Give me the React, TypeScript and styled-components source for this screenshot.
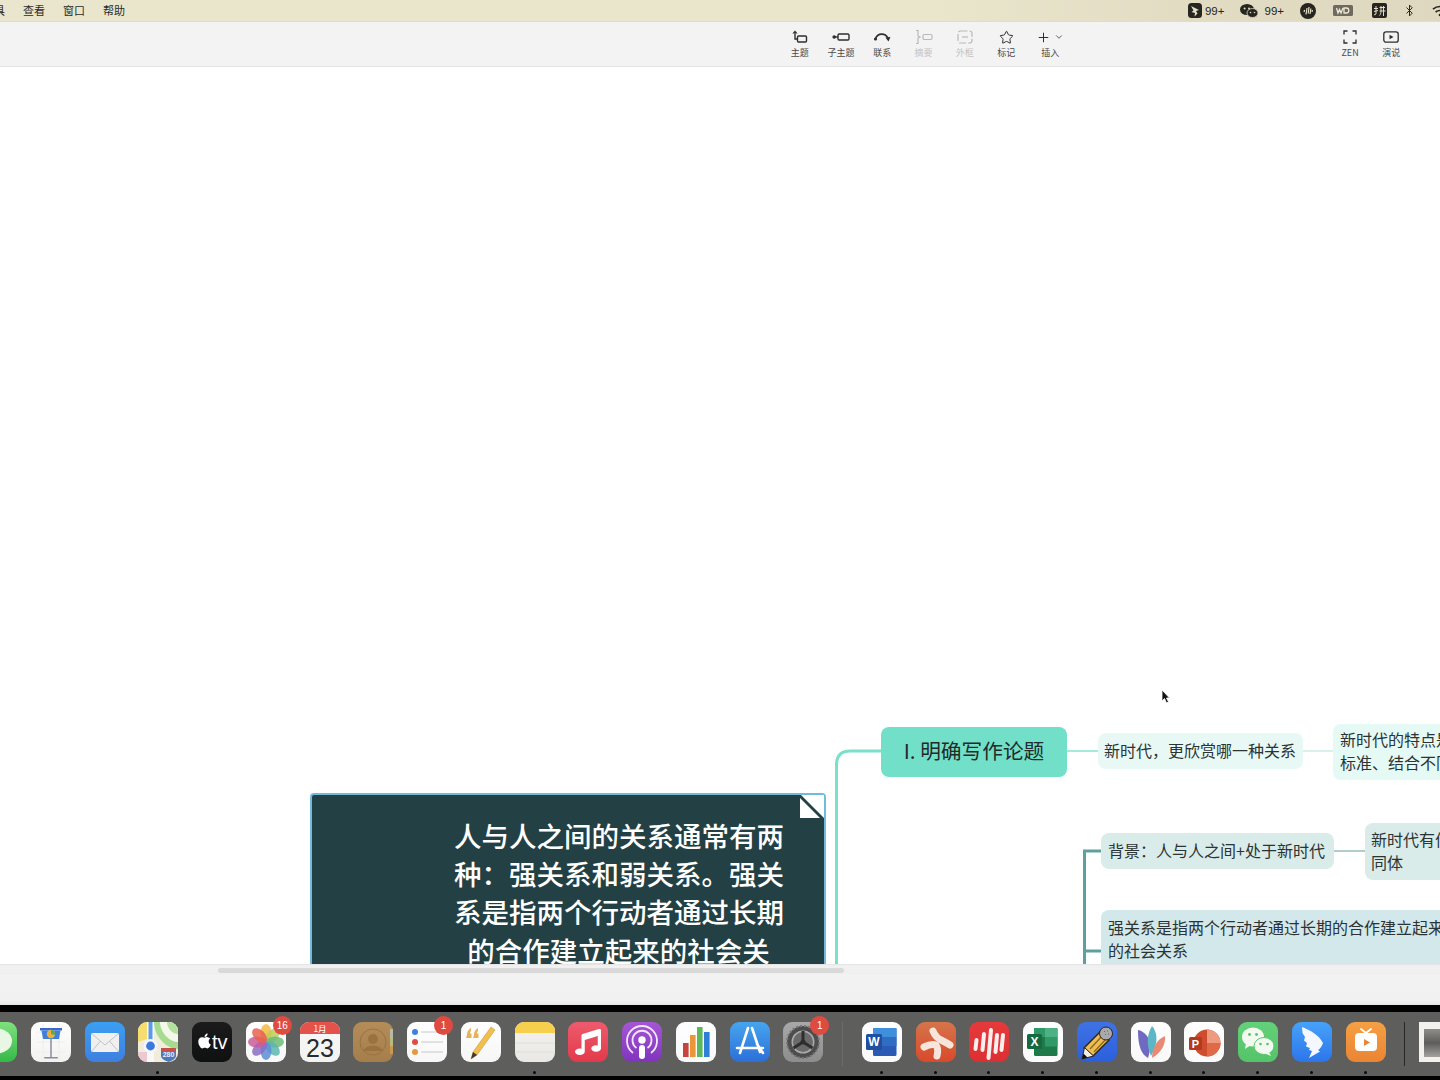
import React from "react";
import styled, { createGlobalStyle } from "styled-components";
import { Star, Plus, ChevronDown, Bluetooth } from "lucide-react";
import { FaApple, FaMusic } from "react-icons/fa";

const GlobalStyle = createGlobalStyle`
  html, body {
    margin: 0;
    padding: 0;
    overflow: hidden;
    background: #fff;
  }
`;

const Page = styled.div`
  width: 1440px;
  height: 1080px;
  display: flex;
  flex-direction: column;
  overflow: hidden;
  font-family: "Noto Sans CJK SC", "Noto Sans", sans-serif;
`;

// Menu bar
const MenuBar = styled.div`
  height: 21px;
  flex: none;
  display: flex;
  align-items: center;
  background: linear-gradient(90deg, #e9e6cd 0%, #e9e6cc 65%, #e2dcc3 82%, #dfd8c0 100%);
  border-bottom: 1px solid #e0ddc4;
  overflow: hidden;
`;

const MenuList = styled.div`
  display: flex;
  gap: 18px;
  margin-left: -6px;
  padding-bottom: 2px;
  font-size: 11px;
  color: #2b2b26;
`;

const Tray = styled.div`
  margin-left: auto;
  margin-right: -8px;
  display: flex;
  align-items: center;
  gap: 16px;
  color: #26251f;
`;

const TrayPair = styled.div<{ $gap: number }>`
  display: flex;
  align-items: center;
  gap: ${(p) => p.$gap}px;
  font-family: "Liberation Sans", sans-serif;
  font-size: 11.5px;
`;

const DiskSlot = styled.div`
  display: flex;
  margin: 0 3px 0 1px;
`;

// Toolbar
const Toolbar = styled.div`
  height: 44px;
  flex: none;
  display: flex;
  padding-left: 779px;
  padding-right: 28px;
  background: #f4f3f4;
  border-bottom: 1px solid #e4e4e4;
`;

const ToolGroup = styled.div<{ $end?: boolean }>`
  display: flex;
  margin-left: ${(p) => (p.$end ? "auto" : "0")};
`;

const Tool = styled.div<{ $off?: boolean; $wide?: boolean }>`
  width: ${(p) => (p.$wide ? 47 : 41.3)}px;
  display: flex;
  flex-direction: column;
  align-items: center;
  padding-top: 7px;
  color: ${(p) => (p.$off ? "#b9b9b9" : "#2e2e2e")};
`;

const ToolIcon = styled.div`
  height: 16px;
  display: flex;
  align-items: center;
  justify-content: center;
  gap: 3px;
`;

const ToolLabel = styled.div<{ $off?: boolean }>`
  margin-top: 2px;
  font-size: 9px;
  line-height: 12px;
  color: ${(p) => (p.$off ? "#c2c2c2" : "#4a4a4a")};
`;

// Canvas
const Canvas = styled.div`
  position: relative;
  flex: 1;
  background: #fff;
  overflow: hidden;
`;

const Links = styled.svg`
  position: absolute;
  inset: 0;
  width: 100%;
  height: 100%;
`;

const Node = styled.div<{
  $x: number;
  $y: number;
  $w: number;
  $h: number;
  $bg: string;
  $pad?: number;
}>`
  position: absolute;
  left: ${(p) => p.$x}px;
  top: ${(p) => p.$y}px;
  width: ${(p) => p.$w}px;
  height: ${(p) => p.$h}px;
  box-sizing: border-box;
  padding-left: ${(p) => p.$pad ?? 7}px;
  padding-bottom: 2px;
  display: flex;
  align-items: center;
  background: ${(p) => p.$bg};
  border-radius: 8px;
  color: #2b3334;
  font-size: 16px;
  line-height: 23px;
  white-space: nowrap;
`;

const TopicTitle = styled(Node)`
  justify-content: center;
  padding-left: 0;
  padding-bottom: 4px;
  font-size: 20.7px;
  color: #1f2b2a;
`;

const BlockNode = styled(Node)<{ $top: number }>`
  display: block;
  padding-top: ${(p) => p.$top}px;
  padding-bottom: 0;
`;

const NoteCard = styled.div`
  position: absolute;
  left: 310px;
  top: 726px;
  width: 516px;
  height: 260px;
  box-sizing: border-box;
  padding: 21px 41px 0 142px;
  border: 2px solid #71bcdc;
  border-radius: 4px;
  background: #234145;
  color: #fff;
  font-size: 27.5px;
  font-weight: 500;
  line-height: 38.2px;
  text-align: center;
  white-space: nowrap;
`;

const NoteFold = styled.svg`
  position: absolute;
  top: -2px;
  right: -2px;
  width: 28px;
  height: 28px;
`;

const Cursor = styled.svg`
  position: absolute;
  left: 1161px;
  top: 622px;
  width: 9px;
  height: 15px;
`;

// Bottom chrome
const ScrollTrack = styled.div`
  height: 11px;
  flex: none;
  box-sizing: border-box;
  padding: 3px 0 2px 218px;
  background: #f0f0f0;
  border-top: 1px solid #e4e4e4;
`;

const ScrollThumb = styled.div`
  width: 626px;
  height: 5px;
  border-radius: 3px;
  background: #d9d9d9;
`;

const StatusBar = styled.div`
  height: 30px;
  flex: none;
  background: linear-gradient(180deg, #f3f3f3 0%, #f1f1f1 85%, #e6e6e6 100%);
`;

const BlackBand = styled.div<{ $h: number }>`
  height: ${(p) => p.$h}px;
  flex: none;
  background: #020202;
`;

const Dock = styled.div`
  height: 64px;
  flex: none;
  box-sizing: border-box;
  padding: 10px 0 0;
  display: flex;
  align-items: flex-start;
  gap: 13.75px;
  background: #5e5e5d;
`;

const DockSlot = styled.div<{ $first?: boolean }>`
  position: relative;
  width: 40px;
  height: 40px;
  flex: none;
  margin-left: ${(p) => (p.$first ? "-23px" : "0")};

  > svg {
    display: block;
  }
`;

const Badge = styled.div`
  position: absolute;
  top: -6px;
  right: -6px;
  width: 19px;
  height: 19px;
  border-radius: 50%;
  background: #df4a41;
  color: #fff;
  font-family: "Liberation Sans", sans-serif;
  font-size: 10px;
  line-height: 19px;
  text-align: center;
`;

const RunDot = styled.div`
  position: absolute;
  left: 18px;
  bottom: -12px;
  width: 3px;
  height: 3px;
  border-radius: 50%;
  background: #0c0c0c;
`;

const DockDivider = styled.div<{ $last?: boolean }>`
  width: 1px;
  height: 44px;
  flex: none;
  margin: 0 ${(p) => (p.$last ? 0 : 5)}px 0 5px;
  background: ${(p) => (p.$last ? "#272727" : "#6c6c6c")};
`;

const DocThumb = styled.div`
  width: 24px;
  height: 40px;
  flex: none;
  box-sizing: border-box;
  padding: 7px 3px 5px 5px;
  background: #f2f1ee;
`;

const DocInk = styled.div`
  height: 100%;
  background: linear-gradient(180deg, #8f8d8a, #5f5d5b 50%, #a3a19e);
`;

// Toolbar drawings
const TopicIcon = () => (
  <svg width="16" height="16" viewBox="0 0 16 16" fill="none" stroke="currentColor" strokeWidth="1.4">
    <rect x="5.5" y="7" width="9" height="6" rx="1" />
    <path d="M3 4.5V10H5.5" />
    <path d="M3 1.5L5.6 4.5H.4Z" fill="currentColor" stroke="none" />
  </svg>
);

const SubTopicIcon = () => (
  <svg width="18" height="16" viewBox="0 0 18 16" fill="none" stroke="currentColor" strokeWidth="1.4">
    <circle cx="2.2" cy="8" r="1.8" fill="currentColor" stroke="none" />
    <path d="M2 8H6" />
    <rect x="6" y="5" width="11" height="6" rx="1.2" />
  </svg>
);

const RelationIcon = () => (
  <svg width="18" height="16" viewBox="0 0 18 16" fill="none" stroke="currentColor" strokeWidth="1.6">
    <path d="M2.5 9.5C5 3.8 12 3.8 15 9" />
    <circle cx="2.5" cy="10" r="1.6" fill="currentColor" stroke="none" />
    <path d="M12.4 8.6L17.4 8L15.5 12.4Z" fill="currentColor" stroke="none" />
  </svg>
);

const SummaryIcon = () => (
  <svg width="18" height="16" viewBox="0 0 18 16" fill="none" stroke="currentColor" strokeWidth="1.2">
    <path d="M1 1.5H3V7L5 8L3 9V14.5H1" />
    <rect x="8" y="5.5" width="9" height="5" rx="1.2" />
  </svg>
);

const BoundaryIcon = () => (
  <svg width="16" height="16" viewBox="0 0 16 16" fill="none" stroke="currentColor" strokeWidth="1.2">
    <rect x="1" y="2" width="14" height="12" rx="2.5" strokeDasharray="7 2" />
    <path d="M5 8H11" />
  </svg>
);

const ZenIcon = () => (
  <svg width="14" height="14" viewBox="0 0 14 14" fill="none" stroke="currentColor" strokeWidth="1.3">
    <path d="M1 4.5V1H4.5M9.5 1H13V4.5M13 9.5V13H9.5M4.5 13H1V9.5" />
  </svg>
);

const PresentIcon = () => (
  <svg width="16" height="14" viewBox="0 0 16 14" fill="none" stroke="currentColor" strokeWidth="1.3">
    <rect x=".8" y="1.8" width="14.4" height="10.4" rx="2.2" />
    <path d="M6.5 4.7L10.5 7L6.5 9.3Z" fill="currentColor" stroke="none" />
  </svg>
);

// Menu bar drawings
const DingTray = () => (
  <svg width="14" height="15" viewBox="0 0 14 15">
    <rect width="14" height="15" rx="3.5" fill="#26251f" />
    <path d="M3 3L11 7L8 8L9.5 10.5L6.5 13.5L7 10L3.5 9L5.5 7.5Z" fill="#e6dfc6" />
  </svg>
);

const WechatTray = () => (
  <svg width="18" height="14" viewBox="0 0 18 14">
    <ellipse cx="7" cy="5.5" rx="7" ry="5.5" fill="#26251f" />
    <ellipse cx="12.5" cy="9" rx="5.5" ry="4.5" fill="#26251f" stroke="#e2dcc3" strokeWidth=".8" />
    <circle cx="4.6" cy="4.5" r="1" fill="#e2dcc3" />
    <circle cx="9" cy="4.5" r="1" fill="#e2dcc3" />
    <circle cx="10.5" cy="8.5" r=".8" fill="#e2dcc3" />
    <circle cx="14.5" cy="8.5" r=".8" fill="#e2dcc3" />
  </svg>
);

const WaveTray = () => (
  <svg width="16" height="16" viewBox="0 0 16 16">
    <circle cx="8" cy="8" r="8" fill="#26251f" />
    <path d="M4 9L4.6 7M6 11.5L7 5M8.2 10.5L9 4M10 11L10.9 5.5M12 9L12.4 7" stroke="#e6dfc6" strokeWidth="1.2" />
  </svg>
);

const DiskTray = () => (
  <svg width="20" height="11" viewBox="0 0 20 11">
    <rect width="20" height="11" rx="1.5" fill="#6f6a5f" />
    <path d="M3.5 3L5 8L6.5 4.5L8 8L10 3M11 3V8H13.5C16.5 8 16.5 3 13.5 3Z" fill="none" stroke="#eee8d2" strokeWidth="1.3" />
  </svg>
);

const PinyinTray = () => (
  <svg width="15" height="15" viewBox="0 0 15 15">
    <rect width="15" height="15" rx="2" fill="#26251f" />
    <path d="M2 5.5H6M4 3V11L2 12M2 8.5L6 7.5M7.5 4.5H13M7.5 8H13.5M9 3V8C9 10 8.5 11.5 7.5 12.5M11.5 3V13" fill="none" stroke="#e6dfc6" strokeWidth="1" />
  </svg>
);

const WifiTray = () => (
  <svg width="16" height="12" viewBox="0 0 16 12" fill="none" stroke="#26251f" strokeWidth="1.7">
    <path d="M1 4.2C5 .6 11 .6 15 4.2M3.6 7C6 5 10 5 12.4 7" />
    <circle cx="8" cy="10" r="1.3" fill="#26251f" stroke="none" />
  </svg>
);

// Dock drawings
const Tile: React.FC<{ id: string; top: string; bottom: string; children?: React.ReactNode }> = ({
  id,
  top,
  bottom,
  children,
}) => (
  <svg width="40" height="40" viewBox="0 0 40 40">
    <defs>
      <linearGradient id={id} x1="0" y1="0" x2="0" y2="1">
        <stop offset="0" stopColor={top} />
        <stop offset="1" stopColor={bottom} />
      </linearGradient>
    </defs>
    <rect width="40" height="40" rx="9" fill={`url(#${id})`} />
    {children}
  </svg>
);

const Messages = () => (
  <Tile id="msg" top="#7ee27d" bottom="#35b847">
    <ellipse cx="20" cy="19" rx="15" ry="12.5" fill="#e8f7e4" />
  </Tile>
);

const Keynote = () => (
  <Tile id="key" top="#ffffff" bottom="#f2f2f0">
    <path d="M6 10H34M6 20H34M6 30H34M12 2V38M28 2V38" stroke="#eeeeee" strokeWidth="1" />
    <rect x="9" y="6" width="22" height="2.5" fill="#3767c8" />
    <path d="M10.5 8.5H29.5L28 17H12Z" fill="#3f7fd9" />
    <circle cx="20" cy="12" r="4.2" fill="#e8b23f" />
    <path d="M20 12V7.8A4.2 4.2 0 0 1 24 13Z" fill="#5ba85b" />
    <rect x="19" y="17" width="2" height="18" fill="#a9a7b4" />
    <rect x="13" y="35" width="14" height="1.6" rx=".8" fill="#8d8b99" />
  </Tile>
);

const Mail = () => (
  <Tile id="mail" top="#3aa0f2" bottom="#3f7ee0">
    <rect x="6" y="11" width="28" height="19" rx="2" fill="#f1f0ee" />
    <path d="M6.5 11.5L20 23L33.5 11.5M6.5 29.5L15.5 19M33.5 29.5L24.5 19" fill="none" stroke="#bfc3cc" strokeWidth="1" />
  </Tile>
);

const Maps = () => (
  <Tile id="maps" top="#eef1dc" bottom="#f2eadb">
    <path d="M16 0H31A9 9 0 0 1 40 9V27C28 27 16 14 16 0Z" fill="#a5dc8f" />
    <path d="M22 0H31A9 9 0 0 1 40 9V20C31 20 22 10 22 0Z" fill="#f3f8ea" />
    <path d="M29 0H31A9 9 0 0 1 40 9V12C34 12 29 6 29 0Z" fill="#b4e29e" />
    <path d="M0 9A9 9 0 0 1 9 0H9V17L0 20Z" fill="#f5dd70" />
    <path d="M0 30H9V40H9A9 9 0 0 1 0 31Z" fill="#eec8d0" />
    <rect x="9" y="0" width="7" height="40" fill="#f8f8f5" />
    <rect x="10.5" y="0" width="4" height="20" fill="#5a9ae8" />
    <circle cx="12.5" cy="24" r="7" fill="#f5f6fb" />
    <circle cx="12.5" cy="24" r="4.4" fill="#3d79dd" />
    <path d="M23 27H38V34C38 37 33 39 30.500 40C28 39 23 37 23 34Z" fill="#4c79ba" />
    <rect x="23" y="26" width="15" height="3" fill="#c6514a" />
    <text x="30.500" y="35" textAnchor="middle" fill="#e8eef6" fontSize="7" fontWeight="700" fontFamily="Liberation Sans, sans-serif">
      280
    </text>
  </Tile>
);

const AppleTv = () => (
  <Tile id="tv" top="#1b1b1c" bottom="#0f1010">
    <g transform="translate(4 10.500)">
      <FaApple size={17} color="#fff" />
    </g>
    <text x="20" y="27" fill="#fff" fontFamily="Liberation Sans, sans-serif" fontSize="20">
      tv
    </text>
  </Tile>
);

const Photos = () => {
  const petals = ["#f5b942", "#b9cf5a", "#6dbb75", "#5ab5b0", "#5b8fd6", "#8b6cc4", "#c85c9a", "#e8604e"];
  return (
    <Tile id="pho" top="#ffffff" bottom="#f8f8f8">
      {petals.map((color, i) => (
        <ellipse
          key={color}
          cx="20"
          cy="11"
          rx="5.5"
          ry="9"
          fill={color}
          opacity=".85"
          transform={`rotate(${i * 45} 20 20)`}
        />
      ))}
    </Tile>
  );
};

const Calendar = () => (
  <Tile id="cal" top="#f8f8f7" bottom="#f2f2f1">
    <path d="M0 12V9A9 9 0 0 1 9 0H31A9 9 0 0 1 40 9V12Z" fill="#e5514b" />
    <text x="20" y="9.500" textAnchor="middle" fill="#fff" fontSize="8.500" fontFamily="Noto Sans CJK SC, sans-serif">
      1月
    </text>
    <text x="20" y="34.700" textAnchor="middle" fill="#2a2a2a" fontSize="25" fontFamily="Liberation Sans, sans-serif">
      23
    </text>
  </Tile>
);

const Contacts = () => (
  <Tile id="con" top="#b48c58" bottom="#a67e4c">
    <circle cx="20" cy="20" r="13" fill="none" stroke="#98733f" strokeWidth="1" />
    <circle cx="20" cy="17" r="5" fill="#98733f" />
    <path d="M10 29C13 22 27 22 30 29" fill="#98733f" />
    <rect x="37" y="7" width="3" height="9" fill="#b7b9a7" />
    <rect x="37" y="16" width="3" height="8" fill="#b9ba80" />
    <rect x="37" y="24" width="3" height="8" fill="#c99a4e" />
  </Tile>
);

const Reminders = () => (
  <Tile id="rem" top="#ffffff" bottom="#f7f7f7">
    <circle cx="8" cy="10" r="3" fill="#3f7fe0" />
    <circle cx="8" cy="20" r="3" fill="#dc4e45" />
    <circle cx="8" cy="30" r="3" fill="#e49a3e" />
    <path d="M14 10H36M14 20H36M14 30H36" stroke="#c8c8c8" strokeWidth="1" />
  </Tile>
);

const Pages = () => (
  <Tile id="pag" top="#ffffff" bottom="#f6f6f6">
    <path d="M6 13C6 9 8 7 10 6V9C9 10 9 11 9 11.500H10.500V16H5ZM13 13C13 9 15 7 17 6V9C16 10 16 11 16 11.500H17.500V16H12Z" fill="#e7b35a" />
    <path d="M30 5L34 8L16 33L10 37L12 30Z" fill="#f0bf4e" stroke="#c99a3c" strokeWidth=".6" />
    <path d="M10 37L12 30L16 33Z" fill="#3a3a3a" />
  </Tile>
);

const Notes = () => (
  <Tile id="not" top="#f3f2ef" bottom="#e9e8e5">
    <path d="M0 11V9A9 9 0 0 1 9 0H31A9 9 0 0 1 40 9V11Z" fill="#f6d04d" />
    <path d="M0 21H40M0 30H40" stroke="#dcdbd8" strokeWidth=".8" />
  </Tile>
);

const Music = () => (
  <Tile id="mus" top="#ee5b6d" bottom="#e23a4b">
    <g transform="translate(7 7)">
      <FaMusic size={26} color="#fff" />
    </g>
  </Tile>
);

const Podcasts = () => (
  <Tile id="pod" top="#a556d6" bottom="#7f35bd">
    <g fill="none" stroke="#f1e6fa" strokeWidth="1.800">
      <path d="M11 31A15 15 0 1 1 29 31" />
      <path d="M14.500 26A9.500 9.500 0 1 1 25.500 26" />
    </g>
    <circle cx="20" cy="18" r="3.700" fill="#fff" />
    <rect x="17" y="23" width="6" height="14" rx="3" fill="#fff" />
  </Tile>
);

const Numbers = () => (
  <Tile id="num" top="#ffffff" bottom="#f8f8f8">
    <rect x="7" y="21" width="5.600" height="14" fill="#c9423c" />
    <rect x="14" y="13" width="5.600" height="22" fill="#e8973a" />
    <rect x="21" y="5" width="5.600" height="30" fill="#5cb85c" />
    <rect x="28" y="10" width="5.600" height="25" fill="#2f7fd6" />
  </Tile>
);

const AppStore = () => (
  <Tile id="app" top="#46a5ee" bottom="#2c6fd8">
    <path d="M22 6L30 30M18 6L10 31M7 26H33M27 22L33 31" fill="none" stroke="#fff" strokeWidth="2.600" strokeLinecap="round" />
  </Tile>
);

const SystemPrefs = () => (
  <Tile id="sys" top="#a9a9a9" bottom="#8d8d8d">
    <circle cx="20" cy="20" r="16" fill="#4d4d4d" />
    <circle cx="20" cy="20" r="16" fill="none" stroke="#777" strokeWidth="2" strokeDasharray="2 2" />
    <circle cx="20" cy="20" r="11.500" fill="#aaa" />
    <circle cx="20" cy="20" r="10" fill="#6a6a6a" />
    <path d="M20 20V9M20 20L10.500 26M20 20L29.500 26" stroke="#2e2e2e" strokeWidth="3" />
    <circle cx="20" cy="20" r="2.500" fill="#2e2e2e" />
  </Tile>
);

const Word = () => (
  <Tile id="wor" top="#ffffff" bottom="#fafafa">
    <rect x="11" y="6" width="23.500" height="28" rx="1.500" fill="#2b5ab4" />
    <rect x="11" y="6" width="23.500" height="9" fill="#3f8fdc" />
    <rect x="11" y="15" width="23.500" height="9" fill="#2f6cc4" />
    <rect x="4" y="12" width="16" height="16" rx="1.500" fill="#1f4f9e" />
    <text x="12" y="24" textAnchor="middle" fill="#fff" fontSize="12" fontWeight="700" fontFamily="Liberation Sans, sans-serif">
      W
    </text>
  </Tile>
);

const MindMap = () => (
  <Tile id="xmi" top="#d5744a" bottom="#d84a2c">
    <g fill="none" stroke="#f7e4da" strokeWidth="7" strokeLinecap="round">
      <path d="M17 9C19 14 23 17 25 18C28 19.500 31 21 34 23" />
      <path d="M8 25C12 23 17 22 20 23C22 26 22 30 21 34" />
    </g>
  </Tile>
);

const RedWave = () => (
  <Tile id="red" top="#e6393b" bottom="#db3033">
    <path d="M6.500 27L7.500 18M13.500 28L15 12M19.500 36L22 8M26.500 30L28 13M32.500 28L34 13" stroke="#fbeeee" strokeWidth="4" strokeLinecap="round" />
  </Tile>
);

const Excel = () => (
  <Tile id="exc" top="#ffffff" bottom="#fafafa">
    <rect x="11" y="6" width="23.500" height="28" rx="1.500" fill="#1f7a4a" />
    <rect x="22" y="6" width="12.500" height="9" fill="#4eb183" />
    <rect x="22" y="15" width="12.500" height="9.500" fill="#2f9a68" />
    <rect x="11" y="6" width="11" height="9" fill="#2f9a68" />
    <rect x="4" y="12" width="15" height="15" rx="1.500" fill="#17693f" />
    <text x="11.500" y="24" textAnchor="middle" fill="#fff" fontSize="12" fontWeight="700" fontFamily="Liberation Sans, sans-serif">
      X
    </text>
  </Tile>
);

const PencilApp = () => (
  <Tile id="pen" top="#3f73e4" bottom="#2c5fdc">
    <path d="M24 9L33 17L17 33L8 25Z" fill="#efbe52" stroke="#2c2416" strokeWidth="1.400" transform="translate(-1 1)" />
    <path d="M26 13L13 27M30 16L17 30" stroke="#8c6a23" strokeWidth="1.400" />
    <circle cx="29" cy="11.500" r="6.500" fill="#a9a9ad" stroke="#2c2416" strokeWidth="1" />
    <path d="M27 9.500H27.800M30 9H30.800M28 12.500H28.800M31 12H31.800" stroke="#55555a" strokeWidth="1.200" />
    <path d="M7.500 25.500L16.500 34L5 37Z" fill="#f4efe2" stroke="#2c2416" strokeWidth="1" />
    <path d="M5 37L6.500 31.500L10.500 35.500Z" fill="#111" />
  </Tile>
);

const Petals = () => (
  <Tile id="pet" top="#ffffff" bottom="#f8f8f8">
    <path d="M7 8C13 9 19 15 19 24C19 29 18 33 17 36C10 32 7 24 7 8Z" fill="#6f6ac0" />
    <path d="M21 4C26 10 27 18 23 28L20 34C16 24 15 14 21 4Z" fill="#5db6c4" />
    <path d="M34 14C35 22 30 31 21 36C21 27 25 18 34 14Z" fill="#e88a74" />
  </Tile>
);

const PowerPoint = () => (
  <Tile id="ppt" top="#ffffff" bottom="#fafafa">
    <circle cx="23" cy="21" r="13.500" fill="#cf4d2e" />
    <path d="M23 7.500A13.500 13.500 0 0 1 36.500 21H23Z" fill="#ee9a80" />
    <path d="M23 21H36.500A13.500 13.500 0 0 1 23 34.500Z" fill="#e06a48" />
    <rect x="5" y="15" width="13" height="13" rx="1.500" fill="#b23a20" />
    <text x="11.500" y="25.500" textAnchor="middle" fill="#fff" fontSize="11" fontWeight="700" fontFamily="Liberation Sans, sans-serif">
      P
    </text>
  </Tile>
);

const Wechat = () => (
  <Tile id="wec" top="#63d179" bottom="#55c368">
    <ellipse cx="15" cy="15" rx="11" ry="9.500" fill="#f3f8f0" />
    <path d="M8 21L7 27L13 23Z" fill="#f3f8f0" />
    <ellipse cx="26" cy="24" rx="10" ry="8.500" fill="#f3f8f0" stroke="#5cc972" strokeWidth="1" />
    <path d="M31 30L33 34L27 31.500Z" fill="#f3f8f0" />
    <circle cx="11.500" cy="12.500" r="1.400" fill="#55c368" />
    <circle cx="18.500" cy="12.500" r="1.400" fill="#55c368" />
    <circle cx="22.500" cy="22" r="1.300" fill="#55c368" />
    <circle cx="29.500" cy="22" r="1.300" fill="#55c368" />
  </Tile>
);

const DingTalk = () => (
  <Tile id="din" top="#46a2fa" bottom="#2d75ea">
    <path d="M10 5C18 8 27 13 31 21C30 24 28 27 26 28L28 29.500L17 36L20 29L17 28L18 26L14 24.500L15 21L12 18.500L13 15L10.500 11Z" fill="#f4f8fe" />
  </Tile>
);

const OrangeTv = () => (
  <Tile id="otv" top="#f5a044" bottom="#ea8433">
    <path d="M15 7L20 11L25 7" fill="none" stroke="#fff" strokeWidth="1.800" strokeLinecap="round" />
    <rect x="9" y="11" width="22" height="18" rx="4" fill="#fff" />
    <path d="M18 17L24 20.500L18 24Z" fill="#ea8433" />
  </Tile>
);

type DockApp = { key: string; Icon: React.FC; badge?: string; running?: boolean };

const leftApps: DockApp[] = [
  { key: "messages", Icon: Messages },
  { key: "keynote", Icon: Keynote },
  { key: "mail", Icon: Mail },
  { key: "maps", Icon: Maps, running: true },
  { key: "tv", Icon: AppleTv },
  { key: "photos", Icon: Photos, badge: "16" },
  { key: "calendar", Icon: Calendar },
  { key: "contacts", Icon: Contacts },
  { key: "reminders", Icon: Reminders, badge: "1" },
  { key: "pages", Icon: Pages },
  { key: "notes", Icon: Notes, running: true },
  { key: "music", Icon: Music },
  { key: "podcasts", Icon: Podcasts },
  { key: "numbers", Icon: Numbers },
  { key: "appstore", Icon: AppStore },
  { key: "prefs", Icon: SystemPrefs, badge: "1" },
];

const rightApps: DockApp[] = [
  { key: "word", Icon: Word, running: true },
  { key: "xmind", Icon: MindMap, running: true },
  { key: "wave", Icon: RedWave, running: true },
  { key: "excel", Icon: Excel, running: true },
  { key: "pencil", Icon: PencilApp, running: true },
  { key: "petals", Icon: Petals, running: true },
  { key: "ppt", Icon: PowerPoint, running: true },
  { key: "wechat", Icon: Wechat, running: true },
  { key: "dingtalk", Icon: DingTalk, running: true },
  { key: "orange", Icon: OrangeTv, running: true },
];

const renderApp = ({ key, Icon, badge, running }: DockApp, first?: boolean) => (
  <DockSlot key={key} $first={first}>
    <Icon />
    {badge && <Badge>{badge}</Badge>}
    {running && <RunDot />}
  </DockSlot>
);

export default function App() {
  return (
    <Page>
      <GlobalStyle />
      <MenuBar>
        <MenuList>
          <span>具</span>
          <span>查看</span>
          <span>窗口</span>
          <span>帮助</span>
        </MenuList>
        <Tray>
          <TrayPair $gap={3}>
            <DingTray />
            <span>99+</span>
          </TrayPair>
          <TrayPair $gap={6}>
            <WechatTray />
            <span>99+</span>
          </TrayPair>
          <WaveTray />
          <DiskSlot>
            <DiskTray />
          </DiskSlot>
          <PinyinTray />
          <Bluetooth size={13} strokeWidth={1.8} />
          <WifiTray />
        </Tray>
      </MenuBar>

      <Toolbar>
        <ToolGroup>
          <Tool>
            <ToolIcon><TopicIcon /></ToolIcon>
            <ToolLabel>主题</ToolLabel>
          </Tool>
          <Tool>
            <ToolIcon><SubTopicIcon /></ToolIcon>
            <ToolLabel>子主题</ToolLabel>
          </Tool>
          <Tool>
            <ToolIcon><RelationIcon /></ToolIcon>
            <ToolLabel>联系</ToolLabel>
          </Tool>
          <Tool $off>
            <ToolIcon><SummaryIcon /></ToolIcon>
            <ToolLabel $off>摘要</ToolLabel>
          </Tool>
          <Tool $off>
            <ToolIcon><BoundaryIcon /></ToolIcon>
            <ToolLabel $off>外框</ToolLabel>
          </Tool>
          <Tool>
            <ToolIcon><Star size={15} strokeWidth={1.6} /></ToolIcon>
            <ToolLabel>标记</ToolLabel>
          </Tool>
          <Tool $wide>
            <ToolIcon>
              <Plus size={15} strokeWidth={1.6} />
              <ChevronDown size={10} strokeWidth={1.8} />
            </ToolIcon>
            <ToolLabel>插入</ToolLabel>
          </Tool>
        </ToolGroup>
        <ToolGroup $end>
          <Tool>
            <ToolIcon><ZenIcon /></ToolIcon>
            <ToolLabel>ZEN</ToolLabel>
          </Tool>
          <Tool>
            <ToolIcon><PresentIcon /></ToolIcon>
            <ToolLabel>演说</ToolLabel>
          </Tool>
        </ToolGroup>
      </Toolbar>

      <Canvas>
        <Links fill="none">
          <path d="M836.500 897V698Q836.500 684 850 684H881" stroke="#79e0cb" strokeWidth="3" />
          <path d="M1067 684H1098" stroke="#a5ebdc" strokeWidth="2" />
          <path d="M1303 684H1333" stroke="#bfe8df" strokeWidth="1.200" />
          <path d="M1101 784H1084.500V897M1084.500 884H1101" stroke="#5e9f9f" strokeWidth="3" />
          <path d="M1334 784H1365" stroke="#7fa8a8" strokeWidth="1.200" />
        </Links>

        <NoteCard>
          人与人之间的关系通常有两
          <br />
          种：强关系和弱关系。强关
          <br />
          系是指两个行动者通过长期
          <br />
          的合作建立起来的社会关
          <br />
          系。
          <NoteFold viewBox="0 0 28 28">
            <path d="M3 2H26V25Z" fill="#fff" />
            <path d="M2 5V25H22Z" fill="#fff" />
          </NoteFold>
        </NoteCard>

        <TopicTitle $x={881} $y={660} $w={186} $h={50} $bg="#72e0c8">
          I. 明确写作论题
        </TopicTitle>
        <Node $x={1098} $y={666} $w={205} $h={36} $bg="#e8f9f5" $pad={6}>
          新时代，更欣赏哪一种关系
        </Node>
        <BlockNode $x={1333} $y={657} $w={200} $h={56} $bg="#e5f9f5" $top={4}>
          新时代的特点是
          <br />
          标准、结合不同
        </BlockNode>
        <Node $x={1101} $y={766} $w={233} $h={36} $bg="#d9ecea">
          背景：人与人之间+处于新时代
        </Node>
        <BlockNode $x={1365} $y={756} $w={200} $h={57} $bg="#d9ecea" $pad={6} $top={5}>
          新时代有何
          <br />
          同体
        </BlockNode>
        <BlockNode $x={1101} $y={843} $w={460} $h={90} $bg="#d3e8ea" $top={6}>
          强关系是指两个行动者通过长期的合作建立起来
          <br />
          的社会关系
        </BlockNode>

        <Cursor viewBox="0 0 9 15">
          <path d="M1 1V12L3.500 9.500L5.500 14L7.500 13L5.500 9H8.500Z" fill="#111" stroke="#fff" strokeWidth=".8" />
        </Cursor>
      </Canvas>

      <ScrollTrack>
        <ScrollThumb />
      </ScrollTrack>
      <StatusBar />
      <BlackBand $h={7} />
      <Dock>
        {leftApps.map((app, i) => renderApp(app, i === 0))}
        <DockDivider />
        {rightApps.map((app) => renderApp(app))}
        <DockDivider $last />
        <DocThumb>
          <DocInk />
        </DocThumb>
      </Dock>
      <BlackBand $h={4} />
    </Page>
  );
}
